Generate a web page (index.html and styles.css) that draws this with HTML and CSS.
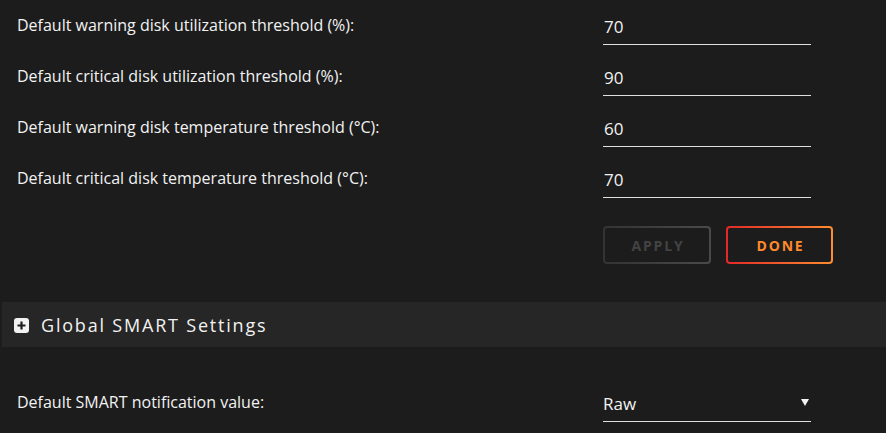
FILE: index.html
```html
<!DOCTYPE html>
<html lang="en">
<head>
    <meta charset="UTF-8">
    <meta name="viewport" content="width=device-width, initial-scale=1.0">
    <title>Disk Settings</title>
    <link rel="stylesheet" href="styles.css">
</head>
<body>
    <div class="settings">
        <div class="row">
            <label class="label" for="warn-util">Default warning disk utilization threshold (%):</label>
            <input class="field" id="warn-util" type="text" value="70">
        </div>
        <div class="row">
            <label class="label" for="crit-util">Default critical disk utilization threshold (%):</label>
            <input class="field" id="crit-util" type="text" value="90">
        </div>
        <div class="row">
            <label class="label" for="warn-temp">Default warning disk temperature threshold (°C):</label>
            <input class="field" id="warn-temp" type="text" value="60">
        </div>
        <div class="row">
            <label class="label" for="crit-temp">Default critical disk temperature threshold (°C):</label>
            <input class="field" id="crit-temp" type="text" value="70">
        </div>
        <div class="buttons">
            <button class="btn btn-disabled" disabled>Apply</button>
            <button class="btn btn-done">Done</button>
        </div>
    </div>

    <div class="section-title">
        <svg class="toggle" width="15" height="15" viewBox="0 0 15 15">
            <rect x="0" y="0" width="15" height="15" rx="3" fill="#f2f2f2"/>
            <path d="M7.5 3.5v8M3.5 7.5h8" stroke="#1c1c1c" stroke-width="2.2"/>
        </svg>
        Global SMART Settings
    </div>

    <div class="settings smart">
        <div class="row">
            <label class="label" for="smart-value">Default SMART notification value:</label>
            <select class="field dropdown" id="smart-value">
                <option>Raw</option>
                <option>Normalized</option>
            </select>
        </div>
    </div>
</body>
</html>
```

FILE: styles.css
```css
body{
    margin: 0;
    background-color: #1c1c1c;
    color: #f2f2f2;
    font-family: "Open Sans", "Noto Sans", sans-serif;
    font-size: 16px;
}
.settings{
    padding-left: 17px;
}
.row{
    display: flex;
    align-items: center;
    height: 51px;
}
.label{
    width: 586px;
    margin-top: -1px;
}
.field{
    box-sizing: border-box;
    width: 208px;
    height: 38px;
    padding: 2px 0 0 1px;
    background: transparent;
    border: none;
    border-bottom: 1px solid #e0e0e0;
    color: #f2f2f2;
    font-family: inherit;
    font-size: 17px;
    outline: none;
}
.buttons{
    display: flex;
    gap: 15px;
    margin-top: 22px;
    padding-left: 586px;
}
.btn{
    box-sizing: border-box;
    width: 108px;
    height: 38px;
    border: 2px solid transparent;
    border-radius: 4px;
    font-family: inherit;
    font-size: 14px;
    font-weight: bold;
    letter-spacing: 1.8px;
    text-transform: uppercase;
    padding: 0 0 0 2px;
}
.btn-disabled{
    background: linear-gradient(#1c1c1c, #1c1c1c) padding-box,
                linear-gradient(90deg, #333333, #4a4a4a) border-box;
    color: #434343;
}
.btn-done{
    width: 107px;
    background: linear-gradient(#1c1c1c, #1c1c1c) padding-box,
                linear-gradient(90deg, #e22828, #ff8d30) border-box;
    color: #ff8a2c;
    cursor: pointer;
}
.section-title{
    display: flex;
    align-items: center;
    gap: 12px;
    height: 45px;
    margin: 38px 0 0 2px;
    padding-left: 12px;
    background-color: #262626;
    font-size: 18px;
    letter-spacing: 1.8px;
    color: #f2f2f2;
}
.toggle{
    margin-top: 1px;
}
.smart{
    margin-top: 30px;
}
.dropdown{
    appearance: none;
    -webkit-appearance: none;
    padding: 2px 0 0 0;
    background-image: url("data:image/svg+xml;utf8,<svg xmlns='http://www.w3.org/2000/svg' width='8' height='7'><path d='M0 0h8L4 7z' fill='%23f2f2f2'/></svg>");
    background-repeat: no-repeat;
    background-position: right 2px center;
    cursor: pointer;
}
.dropdown option{
    background-color: #1c1c1c;
}
```
